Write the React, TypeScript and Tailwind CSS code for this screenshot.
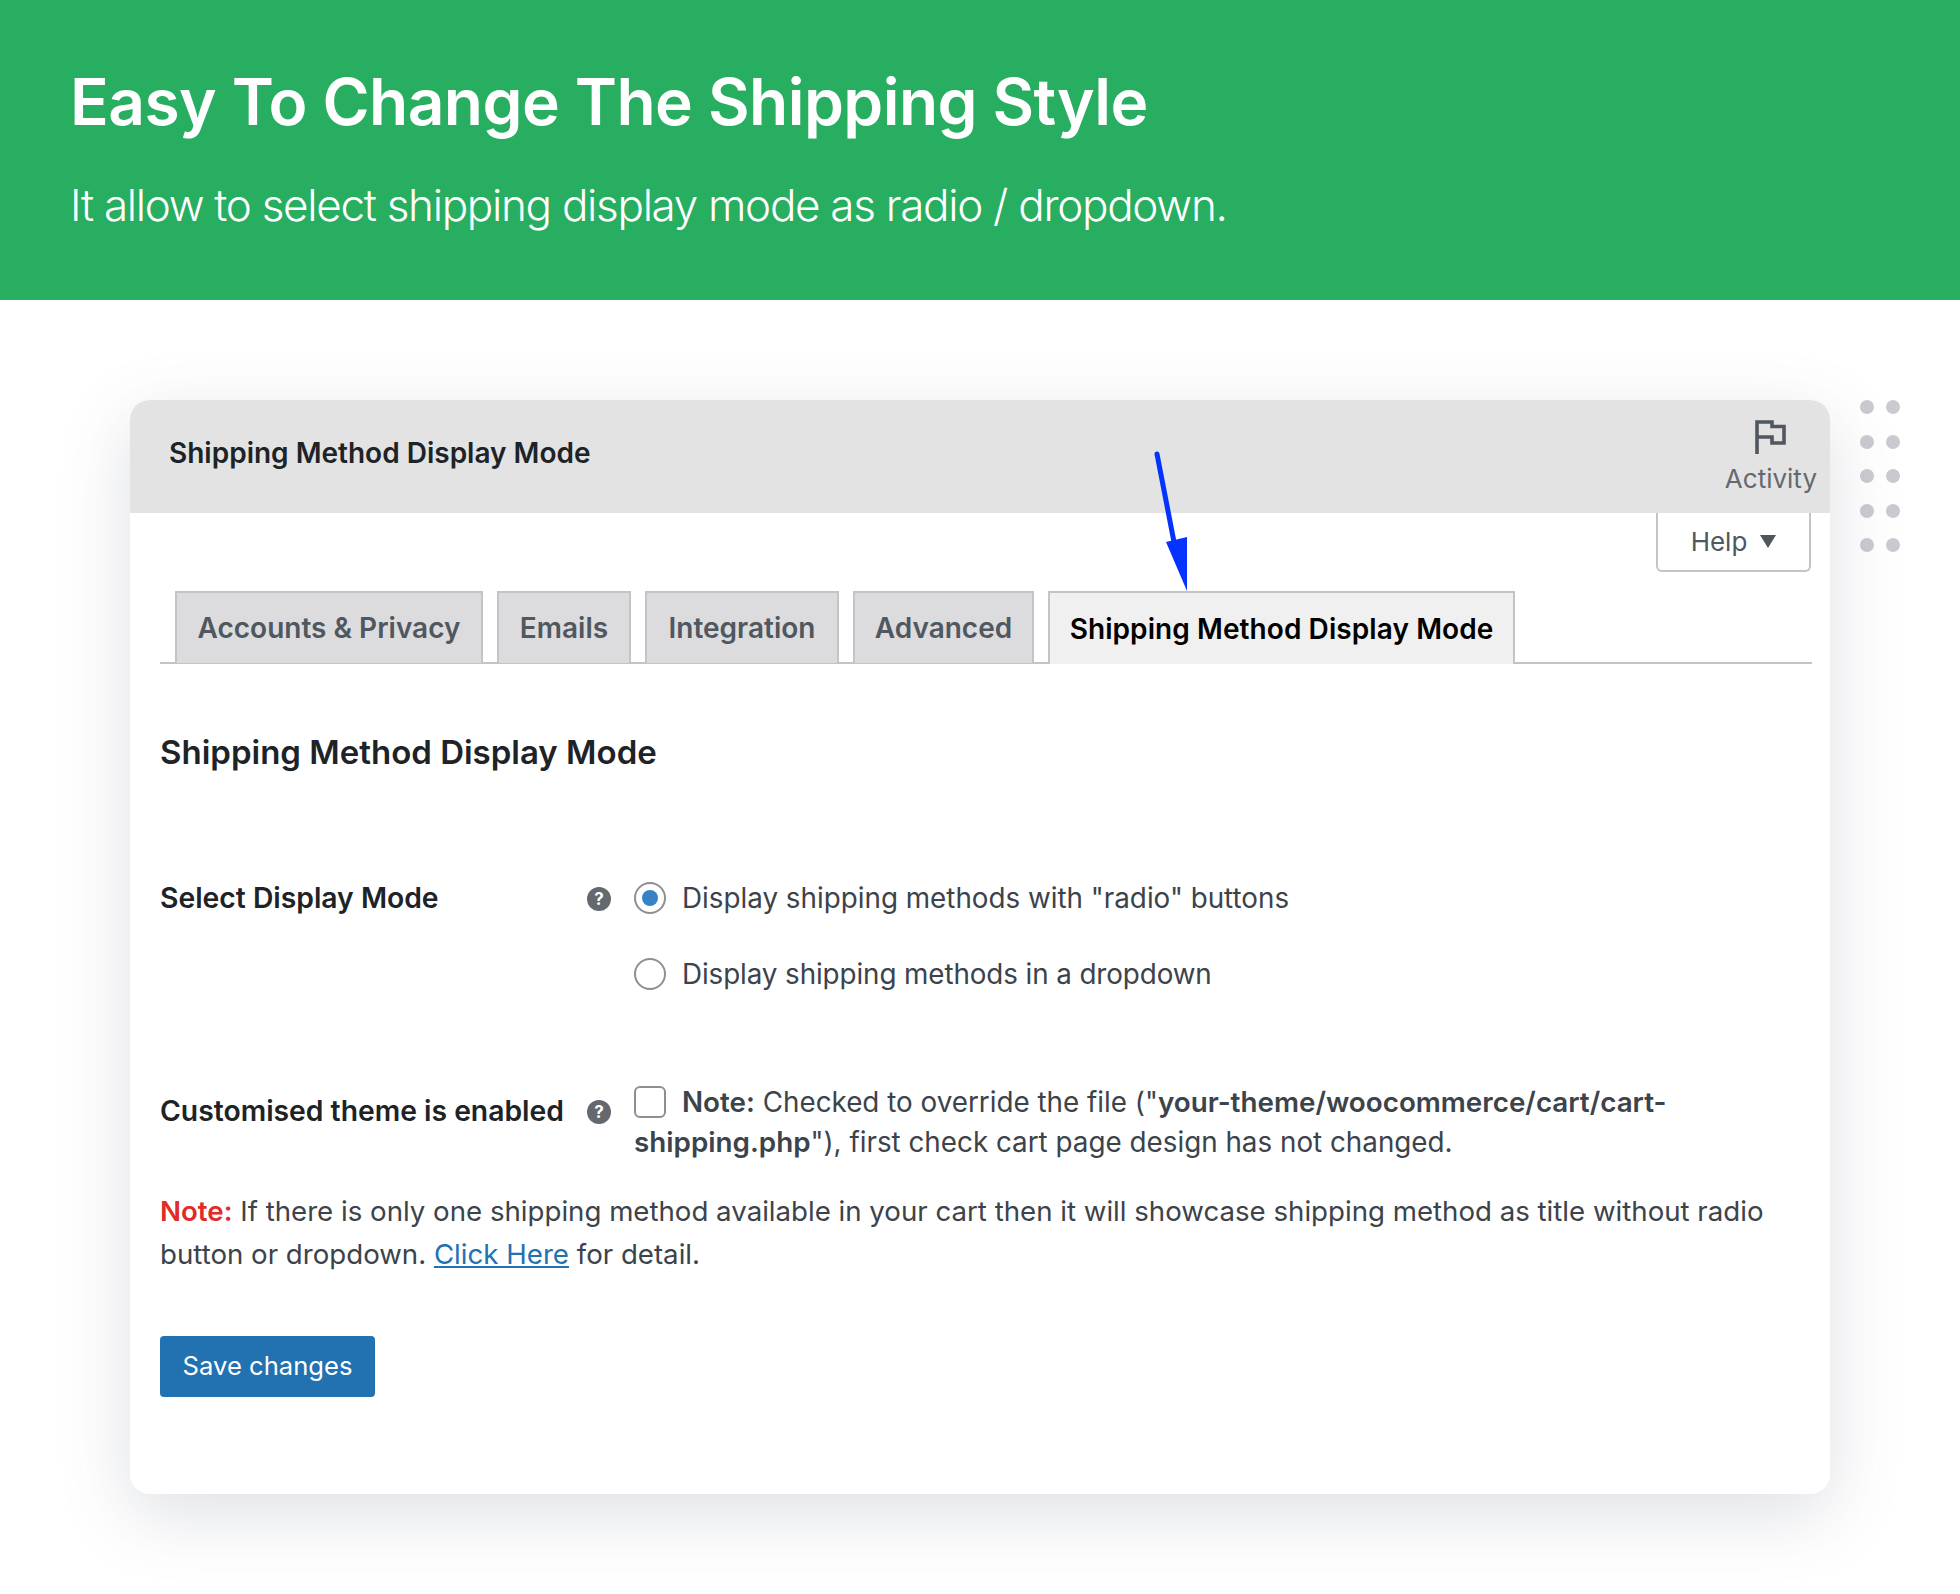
const tabs = [
  { label: 'Accounts & Privacy', width: 'w-[308px]' },
  { label: 'Emails', width: 'w-[134px]' },
  { label: 'Integration', width: 'w-[194px]' },
  { label: 'Advanced', width: 'w-[181px]' },
];

function HelpTip() {
  return (
    <span className="flex h-6 w-6 shrink-0 items-center justify-center rounded-full bg-[#646970] text-[17px] leading-none font-bold text-white">
      ?
    </span>
  );
}

function Radio({ checked }: { checked?: boolean }) {
  return (
    <span className="flex h-8 w-8 shrink-0 items-center justify-center rounded-full border-2 border-[#8c8f94] bg-white">
      {checked && <span className="h-4 w-4 rounded-full bg-[#3582c4]" />}
    </span>
  );
}

function Dots() {
  return (
    <div className="ml-[30px] grid h-fit grid-cols-[14px_14px] gap-x-[12px] gap-y-[20.5px]">
      {Array.from({ length: 10 }).map((_, i) => (
        <span key={i} className="h-[14px] w-[14px] rounded-full bg-[#cacbd1]" />
      ))}
    </div>
  );
}

export default function App() {
  return (
    <div className="h-[1594px] w-[1960px] overflow-hidden bg-white font-['Inter',sans-serif]">
      <header className="flex h-[300px] flex-col bg-[#27ae60] pl-[70px] text-white">
        <h1 className="mt-[62px] text-[64px] leading-[80px] font-semibold tracking-[-0.55px]">Easy To Change The Shipping Style</h1>
        <p className="mt-[35px] text-[44px] leading-[56px] font-light tracking-[-1.3px]">It allow to select shipping display mode as radio / dropdown.</p>
      </header>

      <div className="flex pt-[100px] pl-[130px]">
        <main className="relative h-[1094px] w-[1700px] rounded-[20px] bg-white shadow-[0_20px_70px_rgba(71,85,105,0.18)]">
          <div className="flex h-[113px] items-start justify-between rounded-t-[20px] bg-[#e3e3e3] pr-[13px] pl-[39px]">
            <span className="mt-[35px] text-[28px] leading-[36px] font-semibold text-[#1d2327]">Shipping Method Display Mode</span>
            <div className="flex flex-col items-center pt-[20px]">
              <svg width="31" height="34" viewBox="0 0 31 34" fill="none" stroke="#50575e" strokeWidth="3.6">
                <path d="M2 34V2H17V6.5H29V23H17V17H2" />
              </svg>
              <span className="mt-[8px] text-[26px] leading-[34px] text-[#646970]">Activity</span>
            </div>
          </div>

          <div className="pr-[18px] pl-[30px]">
            <div className="flex justify-end pr-[1px]">
              <div className="flex h-[59px] w-[155px] items-center justify-center gap-[13px] rounded-b-[6px] border-2 border-t-0 border-[#c3c4c7] text-[26px] text-[#50575e]">
                Help
                <span className="h-0 w-0 border-x-[8px] border-t-[13px] border-x-transparent border-t-[#50575e]" />
              </div>
            </div>

            <nav className="mt-[19px] flex h-[73px] gap-[14px] border-b-2 border-[#c3c4c7] pl-[15px] text-[28px] font-semibold">
              {tabs.map(tab => (
                <span key={tab.label} className={`flex h-[72px] items-center justify-center border-2 border-b-0 border-[#c3c4c7] bg-[#dcdcde] text-[#50575e] ${tab.width}`}>
                  {tab.label}
                </span>
              ))}
              <span className="flex h-[73px] w-[467px] items-center justify-center border-2 border-b-0 border-[#c3c4c7] bg-[#f0f0f1] tracking-[0.08px] text-black">
                Shipping Method Display Mode
              </span>
            </nav>

            <h2 className="mt-[66px] text-[33px] leading-[44px] font-semibold text-[#1d2327]">Shipping Method Display Mode</h2>

            <div className="mt-[108px] flex text-[27.8px] text-[#3c434a]">
              <div className="flex w-[474px] items-start justify-between pr-[23px]">
                <span className="text-[28.3px] leading-[32px] font-semibold text-[#1d2327]">Select Display Mode</span>
                <span className="mt-[5px] -ml-[1px]"><HelpTip /></span>
              </div>
              <div className="flex flex-col gap-[44px]">
                <label className="flex h-8 items-center gap-[16px]"><Radio checked /><span className="pt-[2px]">Display shipping methods with "radio" buttons</span></label>
                <label className="flex h-8 items-center gap-[16px]"><Radio /><span className="pt-[2px] tracking-[-0.1px]">Display shipping methods in a dropdown</span></label>
              </div>
            </div>

            <div className="mt-[96px] flex text-[27.8px] leading-[40px] text-[#3c434a]">
              <div className="flex w-[474px] shrink-0 items-start justify-between pt-[9px] pr-[23px]">
                <span className="text-[28.3px] leading-[32px] font-semibold text-[#1d2327]">Customised theme is enabled</span>
                <span className="mt-[5px]"><HelpTip /></span>
              </div>
              <p className="-mt-[4px] w-[1100px]">
                <span className="mr-[16px] inline-block h-8 w-8 rounded-[6px] border-2 border-[#8c8f94] bg-white align-[-6px]" />
                <b className="font-semibold">Note:</b> Checked to override the file ("<b className="font-semibold">your-theme/woocommerce/cart/cart-shipping.php</b>"), first check cart page design has not changed.
              </p>
            </div>

            <p className="mt-[28px] text-[27.65px] leading-[43px] text-[#3c434a]">
              <b className="font-semibold text-[#e02b27]">Note:</b> If there is only one shipping method available in your cart then it will showcase shipping method as title without radio button or dropdown. <a className="text-[#2271b1] underline">Click Here</a> for detail.
            </p>

            <button className="mt-[60px] flex h-[61px] w-[215px] items-center justify-center rounded-[4px] bg-[#2271b1] text-[25.6px] text-white">Save changes</button>
          </div>

          <svg className="absolute top-[50px] left-[1020px]" width="50" height="145" viewBox="0 0 50 145" fill="none">
            <path d="M7 4L24 92" stroke="#0433ff" strokeWidth="5" strokeLinecap="round" />
            <path d="M16 92L37 87V141Z" fill="#0433ff" />
          </svg>
        </main>
        <Dots />
      </div>
    </div>
  );
}
